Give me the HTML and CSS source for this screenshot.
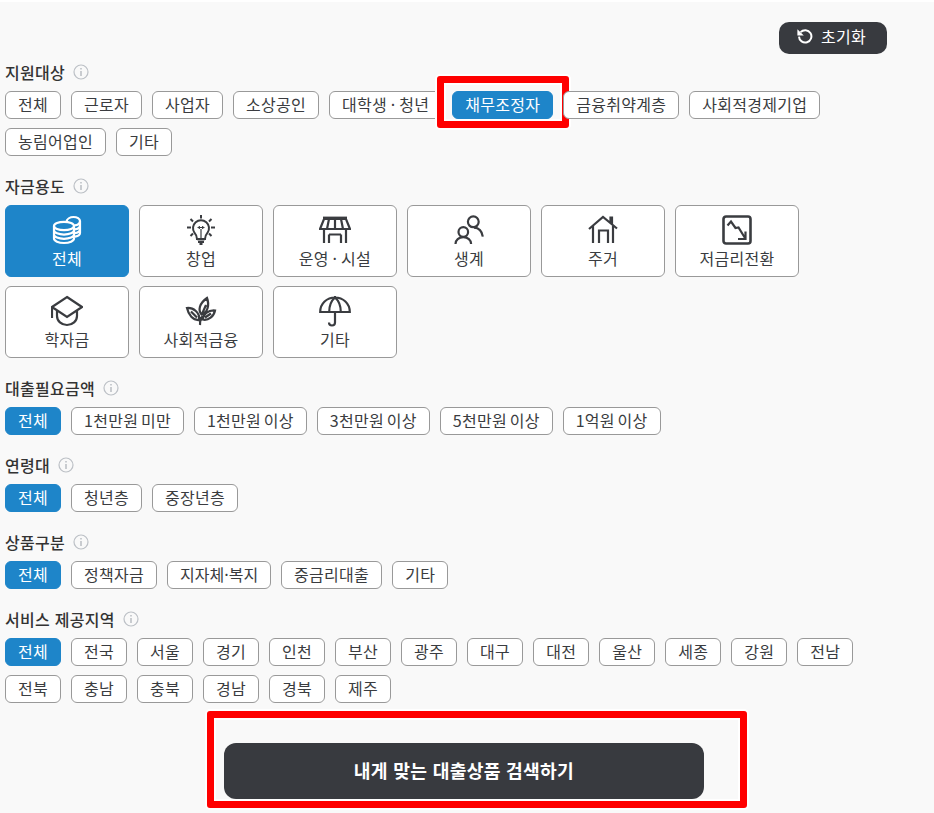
FILE: index.html
```html
<!DOCTYPE html>
<html lang="ko">
<head>
<meta charset="utf-8">
<title>대출상품 검색</title>
<link rel="stylesheet" href="styles.css">
</head>
<body>
<main class="page">
  <div class="topbar">
    <button class="reset"><svg class="reset-icon" viewBox="0 0 16 16"><path d="M3.6 4.2A6.2 6.2 0 1 1 2 8.6" fill="none" stroke="#fff" stroke-width="2"/><path d="M.4 1.200v6.400h6.400z" fill="#fff"/></svg>초기화</button>
  </div>

  <section class="group">
    <h3 class="label">지원대상<svg class="info" viewBox="0 0 16 16"><circle cx="8" cy="8" r="7" fill="none" stroke="#bcc0c6" stroke-width="1.2"/><path d="M8 7v5M8 4v1.4" stroke="#a9aeb5" stroke-width="1.2" fill="none"/></svg></h3>
    <div class="chips">
      <span class="chip">전체</span><span class="chip">근로자</span><span class="chip">사업자</span><span class="chip">소상공인</span><span class="chip spaced">대학생 · 청년</span><span class="chip on mark">채무조정자</span><span class="chip">금융취약계층</span><span class="chip">사회적경제기업</span><span class="chip">농림어업인</span><span class="chip">기타</span>
    </div>
  </section>

  <section class="group">
    <h3 class="label">자금용도<svg class="info" viewBox="0 0 16 16"><circle cx="8" cy="8" r="7" fill="none" stroke="#bcc0c6" stroke-width="1.2"/><path d="M8 7v5M8 4v1.4" stroke="#a9aeb5" stroke-width="1.2" fill="none"/></svg></h3>
    <div class="cards">
      <div class="card on"><svg class="ico" viewBox="0 0 32 32"><ellipse cx="13" cy="12" rx="10" ry="4.2"/><path d="M3 12v12.500C3 27 7.500 29 13 29s10-2 10-4.500V12M3 16.300c0 2.400 4.500 4.300 10 4.300s10-1.900 10-4.300M3 20.500c0 2.400 4.500 4.300 10 4.300s10-1.900 10-4.300M15.500 7.500C16 5 19 3 22.500 3 26.100 3 29 4.800 29 7v12c0 1.700-2.300 3.300-6 3.800M23.500 11.400c3-.3 5.500-2 5.500-4.400M23.500 15.400c3-.3 5.500-1.800 5.500-4.200M23.500 19.200c3-.3 5.500-1.700 5.500-4.100"/></svg><span>전체</span></div>
      <div class="card"><svg class="ico" viewBox="0 0 32 32"><path d="M12 25c0-3-1-4.500-2.600-6.300A8 8 0 1 1 22.600 18.700C21 20.500 20 22 20 25zM12.500 25.500h7M13 28h6M14.500 30h3M16 1v3.500M5.500 5l2.500 2.500M26.500 5L24 7.500M2 13.500h4M26 13.500h4M5.500 22l2.500-2.500M26.500 22L24 19.500" stroke-width="2"/><path d="M12.500 13.500h7M14.300 12v3M17.700 12v3M16 15v9" stroke-width="1.200"/></svg><span>창업</span></div>
      <div class="card"><svg class="ico" viewBox="0 0 32 32"><path d="M5 5h22l4 10H1zM10 5l-2 10M22 5l2 10M16 5v10M5 15v14M27 15v14M10 20.500h12M10 20.500V29M22 20.500V29"/><path d="M4 4h24" stroke-width="2.800"/></svg><span class="spaced">운영 · 시설</span></div>
      <div class="card"><svg class="ico" viewBox="0 0 32 32"><circle cx="20.300" cy="7.800" r="5.400"/><circle cx="10.300" cy="18" r="4.800"/><path d="M2.500 30c0-4 3.300-6.800 7.800-6.800s7.800 2.800 7.800 6.800M21 13.600c4.800.2 8 3.700 8.800 9"/></svg><span>생계</span></div>
      <div class="card"><svg class="ico" viewBox="0 0 32 32"><path d="M2 15L16 3l14 11.500M25 10.500V3.500h-1.500v6M6 12v17M26 12v17M12 29V16.500h9V29"/></svg><span>주거</span></div>
      <div class="card"><svg class="ico" viewBox="0 0 32 32"><rect x="2.500" y="2.500" width="27" height="27" rx="2.500" stroke-width="2.600"/><path d="M6.500 11.500L10 7.500l4.500 6.500 3-.5 6.500 10.500M24.500 17.500v7.500H17"/></svg><span>저금리전환</span></div>
      <div class="card"><svg class="ico" viewBox="0 0 32 32"><path d="M16 2L31 12 16 22 1 12zM1 12v11M6 15.500V21c0 5 4.500 9 10 9s10-4 10-9v-5.500"/></svg><span>학자금</span></div>
      <div class="card"><svg class="ico" viewBox="0 0 32 32"><path d="M15 30c.5-2.500.3-5-.5-8M15.500 26c.3-2 1-3.500 2-5M16.500 19.500c-3.500-4-2.500-11 5.500-16.500 2.500 6.500 1 14.500-5.500 16.500zM14 25C8 25.500 3.500 20 2 13c6-.5 13.500 4.500 12 12zM17.500 24.500c.5-5 5.500-9.500 12.500-9-1 5.500-6.500 10.500-12.500 9zM17 19l4-9M6 16.500l6 6M20 22.500l6-4" stroke-width="2.200"/></svg><span>사회적금융</span></div>
      <div class="card"><svg class="ico" viewBox="0 0 32 32"><path d="M1.200 17C1.200 8.500 8 2.500 16 2.500S30.800 8.500 30.800 17zM16 1v1.500M16 2.500c-3.500 3-5.800 8-5.800 14.500M16 2.500c3.500 3 5.800 8 5.800 14.500M16 17v10.500a3 3 0 0 1-6 0"/></svg><span>기타</span></div>
    </div>
  </section>

  <section class="group">
    <h3 class="label">대출필요금액<svg class="info" viewBox="0 0 16 16"><circle cx="8" cy="8" r="7" fill="none" stroke="#bcc0c6" stroke-width="1.2"/><path d="M8 7v5M8 4v1.4" stroke="#a9aeb5" stroke-width="1.2" fill="none"/></svg></h3>
    <div class="chips">
      <span class="chip on">전체</span><span class="chip money">1천만원 미만</span><span class="chip money">1천만원 이상</span><span class="chip money">3천만원 이상</span><span class="chip money">5천만원 이상</span><span class="chip money">1억원 이상</span>
    </div>
  </section>

  <section class="group">
    <h3 class="label">연령대<svg class="info" viewBox="0 0 16 16"><circle cx="8" cy="8" r="7" fill="none" stroke="#bcc0c6" stroke-width="1.2"/><path d="M8 7v5M8 4v1.4" stroke="#a9aeb5" stroke-width="1.2" fill="none"/></svg></h3>
    <div class="chips">
      <span class="chip on">전체</span><span class="chip">청년층</span><span class="chip">중장년층</span>
    </div>
  </section>

  <section class="group">
    <h3 class="label">상품구분<svg class="info" viewBox="0 0 16 16"><circle cx="8" cy="8" r="7" fill="none" stroke="#bcc0c6" stroke-width="1.2"/><path d="M8 7v5M8 4v1.4" stroke="#a9aeb5" stroke-width="1.2" fill="none"/></svg></h3>
    <div class="chips">
      <span class="chip on">전체</span><span class="chip">정책자금</span><span class="chip dotted">지자체·복지</span><span class="chip">중금리대출</span><span class="chip">기타</span>
    </div>
  </section>

  <section class="group">
    <h3 class="label">서비스 제공지역<svg class="info" viewBox="0 0 16 16"><circle cx="8" cy="8" r="7" fill="none" stroke="#bcc0c6" stroke-width="1.2"/><path d="M8 7v5M8 4v1.4" stroke="#a9aeb5" stroke-width="1.2" fill="none"/></svg></h3>
    <div class="chips">
      <span class="chip on">전체</span><span class="chip">전국</span><span class="chip">서울</span><span class="chip">경기</span><span class="chip">인천</span><span class="chip">부산</span><span class="chip">광주</span><span class="chip">대구</span><span class="chip">대전</span><span class="chip">울산</span><span class="chip">세종</span><span class="chip">강원</span><span class="chip">전남</span><span class="chip">전북</span><span class="chip">충남</span><span class="chip">충북</span><span class="chip">경남</span><span class="chip">경북</span><span class="chip">제주</span>
    </div>
  </section>

  <div class="submit-row">
    <button class="submit">내게 맞는 대출상품 검색하기</button>
  </div>
</main>
</body>
</html>
```
FILE: styles.css
```css
* { box-sizing: border-box; }
html, body { margin: 0; padding: 0; background: #fff; }
body {
  font-family: "Noto Sans CJK KR", "Noto Sans", sans-serif;
  font-size: 16px;
  letter-spacing: .28px;
  color: #3a3c40;
  overflow: hidden;
}
.page {
  margin-top: 2px;
  height: 811px;
  background: #f9f9f9;
  padding: 20px 34px 0 5px;
}
.topbar {
  display: flex;
  justify-content: flex-end;
  padding-right: 13px;
  margin-bottom: 6px;
}
.reset {
  display: flex;
  align-items: center;
  justify-content: center;
  gap: 8px;
  width: 108px;
  height: 32px;
  border: 0;
  border-radius: 10px;
  background: #383a3f;
  color: #fff;
  font: inherit;
  letter-spacing: inherit;
  line-height: 1;
  padding: 0 3px 4px 0;
}
.reset-icon { width: 16px; height: 16px; }
.group { margin-bottom: 18px; }
.label {
  display: flex;
  align-items: center;
  gap: 8px;
  height: 24px;
  margin: 0 0 7px;
  font-size: 16px;
  font-weight: 500;
  color: #333;
}
.info { width: 16px; height: 16px; }
.chips { display: flex; flex-wrap: wrap; gap: 9px 10px; }
.chip {
  position: relative;
  height: 28px;
  padding: 0 12px;
  border: 1px solid #999;
  border-radius: 6px;
  background: #fff;
  line-height: 25px;
  white-space: nowrap;
}
.spaced { word-spacing: -1px; }
.money { word-spacing: -2px; }
.dotted { letter-spacing: 0; }
.chip.on, .card.on {
  background: #1e85c9;
  border-color: #1e85c9;
  color: #fff;
}
.mark::after, .submit::after {
  content: "";
  position: absolute;
  border: 7px solid #f00;
  border-radius: 3px;
  box-shadow: 0 0 0 2px #fff, inset 0 0 0 2px #fff;
  pointer-events: none;
}
.mark::after { top: -16px; left: -16px; right: -17px; bottom: -10px; }
.cards { display: flex; flex-wrap: wrap; gap: 9px 10px; }
.card {
  display: flex;
  flex-direction: column;
  align-items: center;
  width: 124px;
  height: 72px;
  padding-top: 8px;
  border: 1px solid #999;
  border-radius: 6px;
  background: #fff;
  line-height: 24px;
}
.ico {
  width: 32px;
  height: 32px;
  fill: none;
  stroke: #3a3c40;
  stroke-width: 2.2;
}
.card.on .ico { stroke: #fff; }
.submit-row {
  display: flex;
  padding-left: 219px;
  margin-top: 40px;
}
.submit {
  position: relative;
  width: 480px;
  height: 56px;
  border: 0;
  border-radius: 12px;
  background: #383a3f;
  color: #fff;
  font: inherit;
  font-size: 18.2px;
  font-weight: 700;
  letter-spacing: inherit;
  padding: 0 0 3px;
}
.submit::after { top: -32px; left: -17px; right: -43px; bottom: -9px; }
```
